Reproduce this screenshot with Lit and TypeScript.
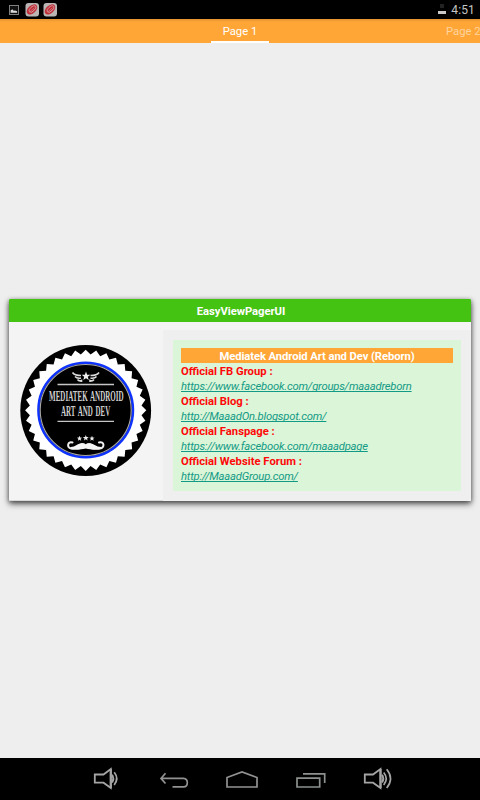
import { LitElement, html, svg, css } from "lit";
import { customElement } from "lit/decorators.js";

const LINKS = [
  { label: "Official FB Group :", url: "https://www.facebook.com/groups/maaadreborn" },
  { label: "Official Blog :", url: "http://MaaadOn.blogspot.com/" },
  { label: "Official Fanspage :", url: "https://www.facebook.com/maaadpage" },
  { label: "Official Website Forum :", url: "http://MaaadGroup.com/" },
];

// Serrated rosette: alternating tips and valleys round the badge centre.
function rosette(cx: number, cy: number, teeth: number, tip: number, valley: number): string {
  const pts: string[] = [];
  for (let i = 0; i < teeth * 2; i++) {
    const r = i % 2 === 0 ? tip : valley;
    const a = (Math.PI * i) / teeth - Math.PI / 2;
    pts.push(`${(cx + r * Math.cos(a)).toFixed(2)},${(cy + r * Math.sin(a)).toFixed(2)}`);
  }
  return pts.join(" ");
}

function star(cx: number, cy: number, r: number): string {
  return rosette(cx, cy, 5, r, r * 0.42);
}

@customElement("status-bar")
class StatusBar extends LitElement {
  static styles = css`
    :host { display: flex; height: 19px; background: #000; align-items: center; justify-content: space-between;
      font: 12px/19px Roboto, sans-serif; color: #c4c4c4; }
    svg { display: block; }
    .right { display: flex; padding-right: 5px; align-items: center; gap: 5px; }
    .clock { line-height: 21px; height: 19px; letter-spacing: 0.15px; }
  `;
  swirl(x: number) {
    return svg`<g transform="translate(${x} 3)">
      <rect width="13.5" height="13.5" rx="3" fill="#b9b5b5"/>
      <ellipse cx="6.5" cy="6.4" rx="6.2" ry="3.9" transform="rotate(-42 6.5 6.4)" fill="#c02f38"/>
      <ellipse cx="7" cy="6" rx="4.2" ry="2.2" transform="rotate(-42 7 6)" fill="none" stroke="#d9a9ac" stroke-width=".7"/>
      <path d="M4.5 8.8 8.8 4.8M6 9.5 10 5.5" stroke="#d9a5a8" stroke-width=".5"/>
    </g>`;
  }
  render() {
    return html`
      <svg width="70" height="19" viewBox="0 0 70 19">
        <rect x="9.5" y="5.5" width="9" height="9" fill="#111" stroke="#808080"/>
        <path d="M10.6 12.8V10.6l1.7-1.3 1.4 1.5 1.2-.4 2.2.9v1.5z" fill="#ddd"/>
        ${this.swirl(25.5)}${this.swirl(43.5)}
      </svg>
      <div class="right">
        <svg width="8" height="19" viewBox="0 0 8 19">
          <rect x="2" y="4" width="4" height="4" fill="#222"/>
          <rect x="0" y="11" width="8" height="3" fill="#c9c9c9"/>
        </svg>
        <span class="clock">4:51</span>
      </div>`;
  }
}

@customElement("tab-strip")
class TabStrip extends LitElement {
  static styles = css`
    :host { display: grid; grid-template-columns: 211px 58px 1fr; height: 24px; overflow: hidden;
      background: linear-gradient(#e29331, #ffa636 3px); font: 11.25px/26px Roboto, sans-serif; color: #fff; }
    .tab { grid-column: 2; box-sizing: border-box; height: 24px; text-align: center; border-bottom: 2px solid #fff; }
    .next { padding-left: 177px; white-space: nowrap; color: #ffd39c; }
  `;
  render() {
    return html`<div class="tab">Page 1</div><div class="next">Page 2</div>`;
  }
}

@customElement("maker-badge")
class MakerBadge extends LitElement {
  static styles = css`
    :host { display: block; }
    svg { display: block; }
    .name { font: bold 14px "Liberation Serif", serif; fill: #d0d0d0; word-spacing: 2px; }
  `;
  render() {
    return html`
      <svg width="154" height="178" viewBox="9 322 154 178">
        <circle cx="85.7" cy="410.5" r="65.4" fill="#000"/>
        <polygon points=${rosette(85.7, 410.3, 36, 60.6, 56)} fill="#fff"/>
        <circle cx="85.7" cy="410" r="47.3" fill="#000" stroke="#0f33ff" stroke-width="2.5"/>
        <circle cx="85.7" cy="410" r="45.5" fill="none" stroke="#aaa" stroke-width="1.1"/>
        <polygon points=${star(86, 376.2, 4.6)} fill="#eee"/>
        <g fill="none" stroke="#ddd" stroke-width="1.6">
          <path d="M72.500 372.500Q74.500 375.500 81 375.500M75 376.500Q77 378.800 81 378M77.500 379.500Q79 381.500 81.500 380.500V382"/>
          <path d="M99 372.500Q97 375.500 90.500 375.500M96.500 376.500Q94.500 378.800 90.500 378M94 379.500Q92.500 381.500 90 380.500V382"/>
        </g>
        <path d="M57.500 384.500H114M57.500 421.300H114" stroke="#c6c6c6" stroke-width="1.3"/>
        <g transform="translate(49 400.800) scale(.57 1)">
          <text class="name" textLength="131" lengthAdjust="spacingAndGlyphs">MEDIATEK ANDROID</text>
        </g>
        <g transform="translate(61 416) scale(.53 1)">
          <text class="name" textLength="93" lengthAdjust="spacingAndGlyphs">ART AND DEV</text>
        </g>
        <polygon points=${star(79.5, 438.5, 2.8)} fill="#eee"/>
        <polygon points=${star(85.8, 438, 3.1)} fill="#eee"/>
        <polygon points=${star(92, 438.5, 2.8)} fill="#eee"/>
        <path d="M72.500 442.500C67.500 440.500 66.500 448 71 448.500C77 449.500 80 447 85.700 447C91.500 447 94.500 449.500 100 448.500C105 448 104.500 440.500 99 442.500" fill="none" stroke="#f0f0f0" stroke-width="2" stroke-linecap="round"/>
        <path d="M70 447C75 447.500 78 443 82 443Q84.500 443 85.700 444.200Q87 443 89.500 443C93 443 96.500 447.500 102 447C98 451 92 449.800 85.700 448.500C79 449.800 73 451 70 447Z" fill="#f6f6f6"/>
      </svg>`;
  }
}

@customElement("info-card")
class InfoCard extends LitElement {
  static styles = css`
    :host { display: block; height: 202px; background: #f4f4f4; overflow: hidden; border-radius: 1px;
      box-shadow: 0 3px 6px rgba(0,0,0,.58), 0 1px 4px rgba(0,0,0,.38);
      font: 11.25px/15px Roboto, sans-serif; }
    .title { height: 23px; padding-left: 2px; background: #45c313; color: #fff; font-weight: bold; line-height: 26px; text-align: center; letter-spacing: -0.03px; }
    .body { display: grid; grid-template-columns: 154px 1fr; height: 179px; }
    .left { box-sizing: border-box; border-bottom: 1px solid #d6d6d6; }
    .right { margin-top: 8px; padding: 10px; background: #efefef; }
    .panel { box-sizing: border-box; height: 151px; padding: 8px; background: #daf5d7; }
    .heading { height: 15px; line-height: 18px; background: #ffa636; color: #fff; font-weight: bold; text-align: center; letter-spacing: -0.09px; }
    .label { height: 15px; line-height: 18px; color: #ff0808; font-weight: bold; }
    .link { display: block; height: 15px; line-height: 18px; color: #139a86; font-style: italic; white-space: nowrap; letter-spacing: -0.21px;
      text-decoration: underline; text-decoration-skip-ink: none; text-underline-offset: 1px; text-decoration-thickness: 1px; }
  `;
  render() {
    return html`
      <div class="title">EasyViewPagerUI</div>
      <div class="body">
        <div class="left"><maker-badge></maker-badge></div>
        <div class="right"><div class="panel">
          <div class="heading">Mediatek Android Art and Dev (Reborn)</div>
          ${LINKS.map((l) => html`<div class="label">${l.label}</div><a class="link">${l.url}</a>`)}
        </div></div>
      </div>`;
  }
}

@customElement("nav-bar")
class NavBar extends LitElement {
  static styles = css`
    :host { display: block; height: 42px; background: #000; }
    svg { display: block; }
  `;
  render() {
    return html`
      <svg width="480" height="42" viewBox="0 758 480 42" fill="none" stroke="#a5a5a5" stroke-width="1.7">
        <path d="M94.800 774.500H103.500L110.800 769V788L103.500 782.700H94.800Z" stroke-width="1.8"/>
        <path d="M110.800 769V788" stroke-width="2.2"/>
        <path d="M112 774.800Q114.500 778.500 112 782.500" stroke-width="2"/>
        <path d="M114.200 772.300Q119.300 778.500 114.200 785"/>
        <path d="M165.500 773.300L161 778.400L165.500 783.500M161.500 778.400H183.500Q187.300 778.700 187.300 782.700Q187.300 786.700 183.500 786.900H172.500" stroke="#929292"/>
        <path d="M227 787V777.500L242 772L257 777.500V787Z" stroke="#929292"/>
        <path d="M297 778.200H319.700V787H297ZM303 773.800H324.700V783" stroke="#8c918e"/>
        <path d="M364.800 774.500H373L380.500 769V788L373 782.700H364.800Z" stroke-width="1.8"/>
        <path d="M380.500 769V788" stroke-width="2.2"/>
        <path d="M382 774.800Q384.500 778.500 382 782.500" stroke-width="2"/>
        <path d="M383.700 772.500Q388.700 778.500 383.700 785M386.700 769.200Q394.300 778.500 386.700 788"/>
      </svg>`;
  }
}

@customElement("app-root")
class AppRoot extends LitElement {
  static styles = css`
    :host { display: flex; flex-direction: column; width: 480px; height: 800px; background: #eee; overflow: hidden; }
    .page { flex: 1; display: flex; flex-direction: column; justify-content: center; padding: 0 9px 1px; }
  `;
  render() {
    return html`
      <status-bar></status-bar>
      <tab-strip></tab-strip>
      <div class="page"><info-card></info-card></div>
      <nav-bar></nav-bar>`;
  }
}
